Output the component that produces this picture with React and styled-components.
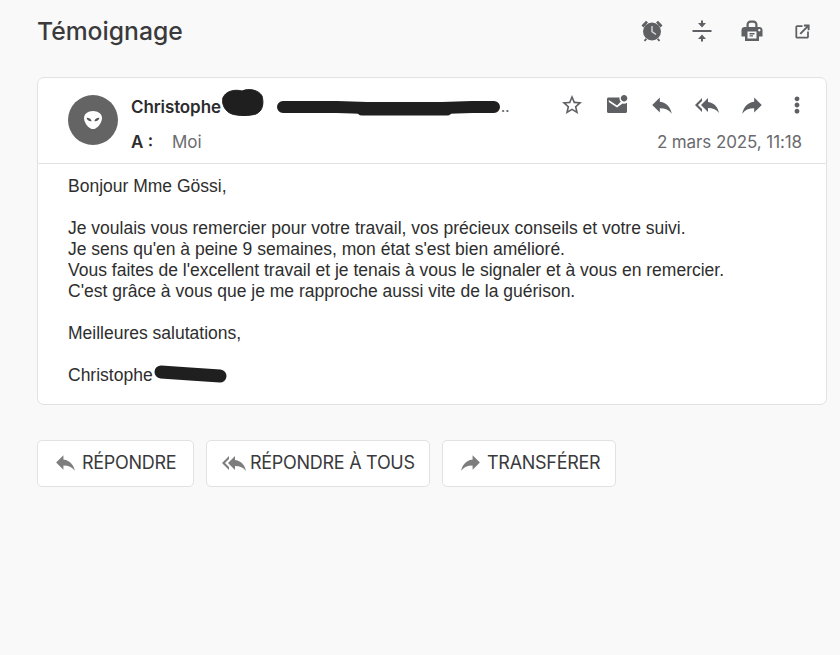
import React from "react";
import styled, { createGlobalStyle } from "styled-components";

const Global = createGlobalStyle`
  html, body { margin: 0; padding: 0; background: #f9f9f9; }
  body { font-family: Inter, "Liberation Sans", sans-serif; color: #2c2c2e; }
`;

const Page = styled.div`
  width: 840px;
  height: 655px;
  box-sizing: border-box;
  padding: 0 13px 0 37px;
  overflow: hidden;
`;
const TopBar = styled.header`
  height: 77px;
  display: flex;
  align-items: flex-start;
  justify-content: space-between;
  padding: 14px 13px 0 0;
  box-sizing: border-box;
`;
const Title = styled.h1`
  margin: 0;
  font-size: 24.7px;
  line-height: 34px;
  font-weight: 500;
  letter-spacing: 0;
  color: #3a3a3c;
`;
const TopIcons = styled.div`
  display: flex;
  align-items: center;
  gap: 26px;
  height: 34px;
`;
const IconSlot = styled.span`
  width: 24px;
  height: 24px;
  flex: none;
  display: flex;
  align-items: center;
  justify-content: center;
`;
const Icon = styled.svg`
  width: ${(p) => p.$size || 24}px;
  height: ${(p) => p.$size || 24}px;
  fill: ${(p) => p.$color || "#5f6063"};
  flex: none;
  display: block;
`;
const Card = styled.section`
  background: #fff;
  border: 1px solid #e2e2e2;
  border-radius: 7px;
  height: 328px;
  box-sizing: border-box;
`;
const CardHead = styled.div`
  position: relative;
  height: 86px;
  box-sizing: border-box;
  border-bottom: 1px solid #e2e2e2;
  padding: 17px 24px 0 30px;
  display: flex;
  gap: 13px;
`;
const Avatar = styled.div`
  width: 50px;
  height: 50px;
  border-radius: 50%;
  background: #646464;
  display: flex;
  align-items: center;
  justify-content: center;
`;
const Meta = styled.div`
  flex: 1;
  display: flex;
  flex-direction: column;
  gap: 11px;
`;
const MetaRow = styled.div`
  display: flex;
  align-items: center;
  justify-content: space-between;
  height: 24px;
`;
const Sender = styled.div`
  font-size: 17px;
  font-weight: 600;
  color: #2c2c2e;
  letter-spacing: -0.1px;
`;
const Dots = styled.span`
  font-size: 13px;
  font-weight: 600;
  color: #666;
  position: absolute;
  left: 463px;
  top: 23px;
  line-height: 13px;
`;
const Recipient = styled.div`
  display: flex;
  font-size: 17px;
`;
const ToLabel = styled.span`
  font-weight: 600;
  width: 41px;
`;
const ToName = styled.span`
  color: #6c6c70;
`;
const Actions = styled.div`
  display: flex;
  align-items: center;
  gap: 21px;
  margin-top: -5px;
  margin-right: -7px;
`;
const DateText = styled.time`
  font-size: 17px;
  color: #6a6a6e;
  letter-spacing: -0.1px;
`;
const Scribble = styled.svg`
  position: absolute;
  overflow: visible;
  fill: #1f1f1f;
  stroke: #1f1f1f;
  stroke-linecap: round;
  stroke-linejoin: round;
`;
const Body = styled.div`
  position: relative;
  padding: 12px 30px 0;
  font-family: "Liberation Sans", Arial, sans-serif;
  font-size: 17.5px;
  line-height: 21px;
  color: #2e2e2e;
`;
const Para = styled.p`
  margin: 0 0 21px;
`;
const ButtonRow = styled.div`
  display: flex;
  gap: 12px;
  margin-top: 35px;
`;
const Button = styled.button`
  height: 47px;
  box-sizing: border-box;
  display: flex;
  align-items: center;
  gap: 4px;
  padding: 0 0 2px 15px;
  width: ${(p) => p.$w}px;
  background: #fff;
  border: 1px solid #e2e2e2;
  border-radius: 5px;
  font-family: Inter, "Liberation Sans", sans-serif;
  font-size: 18px;
  font-weight: 400;
  letter-spacing: -0.28px;
  color: #3a3a3c;
  white-space: nowrap;
`;

const P = {
  reply: "M10 9V5l-7 7 7 7v-4.1c5 0 8.5 1.6 11 5.1-1-5-4-10-11-11z",
  replyAll: "M7 8V5l-7 7 7 7v-3l-4-4 4-4zm6 1V5l-7 7 7 7v-4.1c5 0 8.5 1.6 11 5.1-1-5-4-10-11-11z",
  forward: "M14 9V5l7 7-7 7v-4.1c-5 0-8.5 1.6-11 5.1 1-5 4-10 11-11z",
  star: "M22 9.24l-7.19-.62L12 2 9.19 8.63 2 9.24l5.46 4.73L5.82 21 12 17.27 18.18 21l-1.63-7.03L22 9.24zM12 15.4l-3.76 2.27 1-4.28-3.32-2.88 4.38-.38L12 6.1l1.71 4.04 4.38.38-3.32 2.88 1 4.28L12 15.4z",
  mail: "M22 9.2V18.5c0 .8-.7 1.5-1.5 1.5h-17C2.7 20 2 19.3 2 18.5V6c0-.8.7-1.5 1.5-1.5h11.1c-.06.3-.1.6-.1 1 0 1.3.5 2.4 1.3 3.2L12 12.6 3.8 7v2l8.2 5.6 5.6-4.1c.5.2 1 .3 1.5.3 1.1 0 2.1-.4 2.9-1.1zM15.8 5.3c0 1.8 1.5 3.3 3.3 3.3s3.2-1.5 3.2-3.3S20.9 2 19.1 2s-3.3 1.5-3.3 3.3z",
  more: "M12 8.2c1.3 0 2.4-1 2.4-2.4S13.3 3.5 12 3.5 9.6 4.5 9.6 5.8 10.7 8.2 12 8.2zm0 1.4c-1.3 0-2.4 1-2.4 2.4s1.1 2.4 2.4 2.4 2.4-1 2.4-2.4-1.1-2.4-2.4-2.4zm0 6.2c-1.3 0-2.4 1-2.4 2.4s1.1 2.4 2.4 2.4 2.4-1 2.4-2.4-1.1-2.4-2.4-2.4z",
  open: "M18.5 19.5h-14v-14H12V3H4.5C3.1 3 2 4.1 2 5.5v14C2 20.9 3.1 22 4.5 22h14c1.4 0 2.5-1.1 2.5-2.5V12h-2.5v7.5zM14 2v2.8h3.4L7.8 14.4l2 2L19.3 6.8V10.200H22V2h-8z",
  compress: "M8 20h3v2.500h2V20h3l-4-4.500L8 20zM16 4h-3V1.500h-2V4H8l4 4.500L16 4zM2.500 11v2h19v-2h-19z",
  print: "M6.500 8V5.500C6.500 3.300 8.300 1.500 10.500 1.500h3c2.200 0 4 1.800 4 4V8h-2.200V5.500c0-1-.8-1.800-1.800-1.800h-3c-1 0-1.800.8-1.800 1.800V8H6.500zM4.500 8h15C21 8 22.500 9.300 22.500 11v6.500H19v4.500H5v-4.500H1.500V11C1.500 9.300 3 8 4.500 8zM7.500 12.500V19.500h9V12.500h-9zM9.500 14h5v1.500h-5V14zM9.500 16.300h3.500v1.300H9.500v-1.300zM19.300 10c-.7 0-1.200.5-1.200 1.200s.5 1.200 1.200 1.200 1.200-.5 1.200-1.200-.5-1.200-1.200-1.200z",
};

const G = ({ d, size, color }) => (
  <Icon viewBox="0 0 24 24" $size={size} $color={color}>
    <path d={d} fillRule="evenodd" />
  </Icon>
);

const Slot = (props) => (
  <IconSlot>
    <G {...props} />
  </IconSlot>
);

const Alarm = () => (
  <Icon viewBox="0 0 24 24">
    <path d="M1.500 6.500 6 1.800l2 1.600-4.500 5zM22.500 6.500 18 1.800l-2 1.600 4.500 5z" />
    <circle cx="12" cy="12.500" r="9" />
    <path d="M5.400 19.200 3.800 21.600l1.500.8 1.800-2.200zM18.600 19.200l1.600 2.400-1.500.8-1.800-2.200z" />
    <path d="M11.300 7h1.400v5.200l3.700 2.700-.8 1.100-4.300-3.100z" fill="#d9d9d9" />
  </Icon>
);

const Alien = () => (
  <svg width="20" height="20" viewBox="0 0 20 22" preserveAspectRatio="none" style={{ display: "block" }}>
    <path d="M10 1C4.800 1 1 4.300 1 9c0 5 5 12 9 12s9-7 9-12c0-4.700-3.800-8-9-8z" fill="#fff" />
    <path d="M3.600 8.600c2.600-.2 4.600 1.400 5 3.800-2.600.3-4.700-1.300-5-3.800zM16.400 8.600c-2.600-.2-4.600 1.400-5 3.800 2.600.3 4.700-1.300 5-3.800z" fill="#555" />
  </svg>
);

export default function App() {
  return (
    <Page>
      <Global />
      <TopBar>
        <Title>Témoignage</Title>
        <TopIcons>
          <IconSlot><Alarm /></IconSlot>
          <Slot d={P.compress} />
          <Slot d={P.print} />
          <Slot d={P.open} size={17} />
        </TopIcons>
      </TopBar>
      <Card>
        <CardHead>
          <Avatar><Alien /></Avatar>
          <Meta>
            <MetaRow>
              <Sender>Christophe</Sender>
              <Actions>
                <Slot d={P.star} />
                <Slot d={P.mail} />
                <Slot d={P.reply} size={26} />
                <Slot d={P.replyAll} />
                <Slot d={P.forward} size={26} />
                <Slot d={P.more} />
              </Actions>
            </MetaRow>
            <MetaRow>
              <Recipient>
                <ToLabel>A :</ToLabel>
                <ToName>Moi</ToName>
              </Recipient>
              <DateText>2 mars 2025, 11:18</DateText>
            </MetaRow>
          </Meta>
          <Dots>..</Dots>
          <Scribble width="45" height="30" style={{ left: 184, top: 11 }} viewBox="0 0 45 30">
            <path d="M1 9C3 2 13 0 20 2c7-3 17-1 20 5 2 7 1 15-6 18-7 2-17 2-24 0C4 23-1 16 1 9z" />
          </Scribble>
          <Scribble width="225" height="16" style={{ left: 239, top: 21 }} viewBox="0 0 225 16">
            <path d="M6 8H60L90 9H165L195 8H217" fill="none" strokeWidth="12" />
            <path d="M85 11H170" fill="none" strokeWidth="11" />
          </Scribble>
        </CardHead>
        <Body>
          <Para>Bonjour Mme Gössi,</Para>
          <Para>
            Je voulais vous remercier pour votre travail, vos précieux conseils et votre suivi.<br />
            Je sens qu'en à peine 9 semaines, mon état s'est bien amélioré.<br />
            Vous faites de l'excellent travail et je tenais à vous le signaler et à vous en remercier.<br />
            C'est grâce à vous que je me rapproche aussi vite de la guérison.
          </Para>
          <Para>Meilleures salutations,</Para>
          <Para>Christophe</Para>
          <Scribble width="72" height="16" style={{ left: 122, top: 205 }} viewBox="0 0 72 16">
            <path d="M1 3 30 5 60 7" fill="none" strokeWidth="13" />
          </Scribble>
        </Body>
      </Card>
      <ButtonRow>
        <Button $w={157}><G d={P.reply} size={25} color="#7d7d7d" />RÉPONDRE</Button>
        <Button $w={224}><G d={P.replyAll} color="#7d7d7d" />RÉPONDRE À TOUS</Button>
        <Button $w={174}><G d={P.forward} size={25} color="#7d7d7d" />TRANSFÉRER</Button>
      </ButtonRow>
    </Page>
  );
}
